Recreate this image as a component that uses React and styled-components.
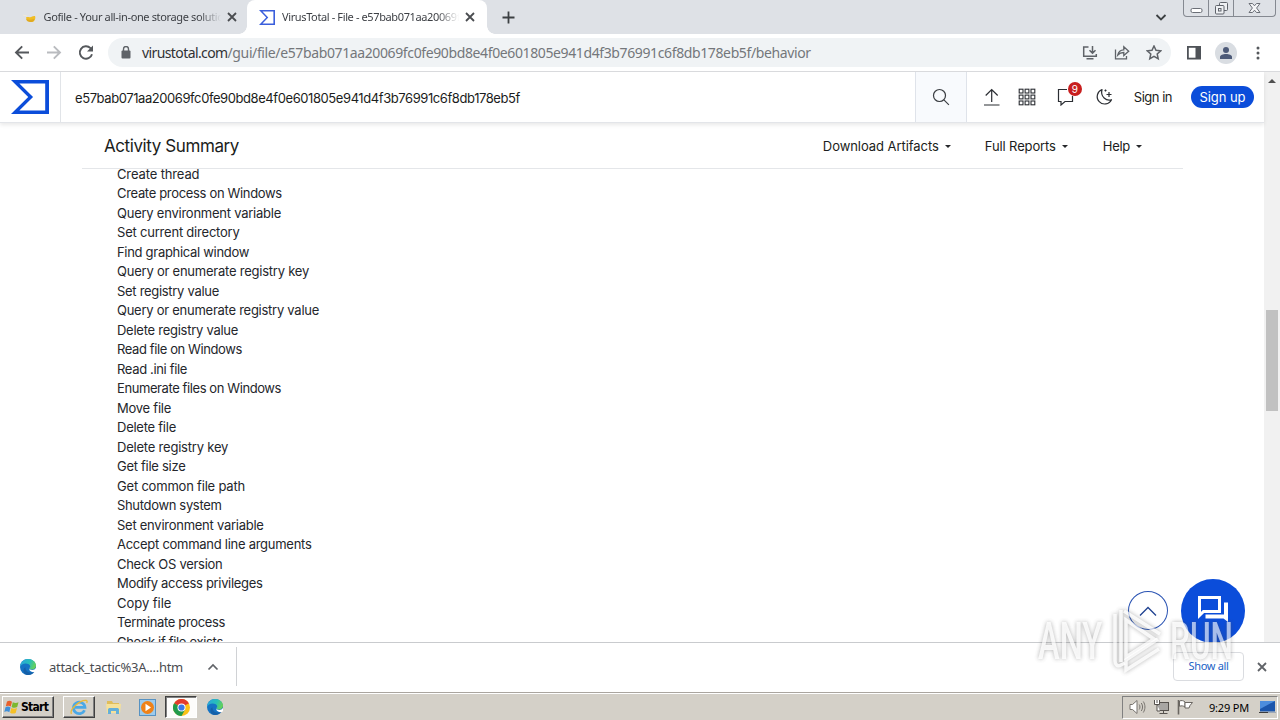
import React from "react"
import styled, { createGlobalStyle } from "styled-components"

const GlobalStyle = createGlobalStyle`
  * {
    box-sizing: border-box;
  }
  body {
    margin: 0;
    overflow: hidden;
    background: #fff;
  }
  svg {
    display: block;
    flex: none;
  }
`

const Screen = styled.div`
  position: relative;
  width: 1280px;
  height: 720px;
  display: flex;
  flex-direction: column;
  overflow: hidden;
  background: #fff;
  color: #202124;
  font-family: "Noto Sans", sans-serif;
`

/* browser chrome */
const TabStrip = styled.div`
  flex: none;
  height: 34px;
  display: flex;
  align-items: stretch;
  background: #dee1e6;
`
const Tab = styled.div`
  position: relative;
  width: ${p => (p.$active ? 240 : 247)}px;
  display: flex;
  align-items: center;
  padding-left: ${p => (p.$active ? 12 : 22)}px;
  border-radius: 8px 8px 0 0;
  background: ${p => (p.$active ? "#fff" : "transparent")};

  &::before,
  &::after {
    content: "";
    display: ${p => (p.$active ? "block" : "none")};
    position: absolute;
    bottom: 0;
    width: 8px;
    height: 8px;
  }
  &::before {
    left: -8px;
    background: radial-gradient(circle at 0 0, transparent 7.5px, #fff 8px);
  }
  &::after {
    right: -8px;
    background: radial-gradient(circle at 100% 0, transparent 7.5px, #fff 8px);
  }
`
const TabTitle = styled.div`
  width: 177px;
  margin: 0 6px 0 ${p => p.$before}px;
  overflow: hidden;
  white-space: nowrap;
  font-size: 11px;
  line-height: 16px;
  letter-spacing: ${p => p.$spacing}px;
  color: #3c3f44;
  mask-image: linear-gradient(90deg, #000 155px, transparent 177px);
`
const NewTab = styled.div`
  display: flex;
  align-items: center;
  margin-left: 15px;
  flex: 1;
`
const TabSearch = styled.div`
  display: flex;
  align-items: center;
  margin-right: 16px;
`
const WindowButtons = styled.div`
  display: grid;
  grid-template-columns: 25px 25px 41px;
  height: 17px;
  margin-right: 4px;
  border: 1px solid #858991;
  border-top: 0;
  border-radius: 0 0 4px 4px;
`
const WindowButton = styled.div`
  display: flex;
  justify-content: center;
  border-right: 1px solid #858991;

  &:last-child {
    border: 0;
  }
`
const Toolbar = styled.div`
  flex: none;
  height: 38px;
  display: flex;
  align-items: center;
  padding-left: 14px;
  border-bottom: 1px solid #d9dadd;
`
const NavButtons = styled.div`
  display: flex;
  gap: 16px;
`
const AddressBar = styled.div`
  flex: none;
  width: 1063px;
  height: 29px;
  margin-left: 14px;
  padding: 0 9px 0 12px;
  display: flex;
  align-items: center;
  border-radius: 15px;
  background: #f0f3f5;
`
const Url = styled.div`
  flex: 1;
  margin-left: 10px;
  white-space: nowrap;
  font-size: 14px;
  letter-spacing: -0.38px;
  color: #74777b;
`
const Domain = styled.span`
  letter-spacing: -0.6px;
  color: #303134;
`
const AddressActions = styled.div`
  display: flex;
  gap: 16px;
`
const ToolbarActions = styled.div`
  display: flex;
  align-items: center;
  gap: 13px;
  margin-left: 15px;
`
const Avatar = styled.div`
  width: 22px;
  height: 22px;
  display: flex;
  align-items: center;
  justify-content: center;
  border-radius: 50%;
  background: #d9dde2;
`

/* page */
const Viewport = styled.div`
  flex: none;
  height: 570px;
  display: flex;
  overflow: hidden;
`
const Page = styled.div`
  position: relative;
  width: 1264px;
  font-family: Inter, sans-serif;
`
const Scrollbar = styled.div`
  width: 16px;
  display: flex;
  flex-direction: column;
  align-items: center;
  padding-top: 6px;
  background: #f1f1f1;
`
const ScrollThumb = styled.div`
  width: 12px;
  height: 101px;
  margin-top: 226px;
  background: #c1c1c1;
`
const SiteHeader = styled.header`
  position: relative;
  height: 51px;
  display: flex;
  align-items: center;
  border-bottom: 1px solid #e3e5e9;
  box-shadow: 0 2px 4px rgba(0, 0, 0, 0.09);
`
const Brand = styled.div`
  width: 61px;
  height: 50px;
  padding: 8px 0 0 11px;
  border-right: 1px solid #e1e4e8;
`
const SearchText = styled.div`
  flex: 1;
  padding: 1px 0 0 14px;
  font-size: 13px;
  letter-spacing: -0.42px;
  color: #1b1d20;
`
const SearchButton = styled.div`
  width: 52px;
  height: 50px;
  display: flex;
  align-items: center;
  justify-content: center;
  border: solid #dfe3ea;
  border-width: 0 1px;
  background: #f8fafd;
`
const HeaderTools = styled.div`
  display: flex;
  align-items: center;
  margin-left: 15px;
  gap: 17px;
`
const Notifications = styled.div`
  position: relative;
  margin: 0 3px 0 4px;
`
const Badge = styled.span`
  position: absolute;
  top: -6px;
  left: 11px;
  width: 14px;
  height: 14px;
  border-radius: 50%;
  background: #c81e1e;
  color: #fff;
  font-size: 10px;
  line-height: 14px;
  text-align: center;
`
const SignIn = styled.span`
  margin-left: 21px;
  font-size: 13px;
  letter-spacing: -0.5px;
  color: #1b1d20;
`
const SignUp = styled.span`
  width: 63px;
  height: 22px;
  margin: 0 10px 0 19px;
  border-radius: 11px;
  background: #0b4dda;
  color: #fff;
  font-size: 13px;
  line-height: 22px;
  letter-spacing: -0.06px;
  text-align: center;
`
const SummaryBar = styled.div`
  height: 46px;
  width: 1101px;
  margin-left: 82px;
  padding: 0 41px 0 22px;
  display: flex;
  align-items: center;
  border-bottom: 1px solid #e4e6e9;
`
const SummaryTitle = styled.h1`
  flex: 1;
  margin: 0;
  font-size: 17px;
  font-weight: 400;
  letter-spacing: -0.41px;
  color: #1b1d20;
`
const MenuLabel = styled.div`
  display: flex;
  align-items: center;
  gap: 6px;
  margin-left: ${p => p.$before}px;
  font-size: 13px;
  letter-spacing: ${p => p.$spacing}px;
  color: #1b1d20;
`
const Caret = styled.i`
  margin-top: 1px;
  border: solid transparent;
  border-width: 3px 3px 0;
  border-top-color: #26282b;
`
const ActivityList = styled.ul`
  height: 478px;
  margin: -5px 0 0 117px;
  padding: 0.5px 0 0;
  list-style: none;
`
const Activity = styled.li`
  height: 19.5px;
  font-size: 13px;
  line-height: 19.5px;
  white-space: nowrap;
  letter-spacing: ${p => p.$spacing}px;
  color: #24262b;
`
const ScrollTop = styled.div`
  position: absolute;
  left: 1128px;
  top: 519px;
  width: 40px;
  height: 39px;
  display: flex;
  align-items: center;
  justify-content: center;
  border: 1px solid #2c55b4;
  border-radius: 50%;
  background: #fff;
`
const ChatButton = styled.div`
  position: absolute;
  left: 1181px;
  top: 507px;
  width: 64px;
  height: 64px;
  padding: 15px 0 0 16px;
  border-radius: 50%;
  background: #0b4dda;
`

/* downloads shelf */
const Shelf = styled.div`
  flex: none;
  height: 50px;
  display: flex;
  align-items: center;
  padding-bottom: 2px;
  border-top: 1px solid #c9cbce;
`
const Download = styled.div`
  width: 237px;
  height: 39px;
  padding-left: 20px;
  display: flex;
  align-items: center;
  border-right: 1px solid #d0d2d5;
`
const FileName = styled.span`
  width: 158px;
  margin-left: 13px;
  font-size: 13px;
  letter-spacing: -0.3px;
  color: #4a4c50;
`
const ShowAll = styled.div`
  width: 71px;
  height: 29px;
  margin: 0 13px 0 auto;
  border: 1px solid #dadce0;
  border-radius: 4px;
  color: #1a62c5;
  font-size: 11px;
  line-height: 26px;
  letter-spacing: -0.33px;
  text-align: center;
`
const CloseShelf = styled.div`
  margin-right: 13px;
`

/* taskbar */
const Taskbar = styled.div`
  flex: none;
  height: 28px;
  display: flex;
  align-items: center;
  padding: 1px 2px 0;
  border-top: 1px solid #aaa59f;
  box-shadow: inset 0 1px 0 #fff;
  background: #d4d0c8;
`
const StartButton = styled.div`
  width: 52px;
  height: 22px;
  display: flex;
  align-items: center;
  gap: 1px;
  padding-left: 1px;
  border: 1px solid;
  border-color: #fff #404040 #404040 #fff;
  box-shadow: inset -1px -1px 0 #808080;
  color: #000;
  font: bold 12px "DejaVu Sans Condensed", "DejaVu Sans", sans-serif;
  letter-spacing: -0.7px;
`
const TaskButton = styled.div`
  width: 32px;
  height: 22px;
  display: flex;
  align-items: center;
  justify-content: center;
  margin-left: ${p => p.$before || 2}px;
  border: 1px solid transparent;
  ${p => p.$state === "open" && "border-color: #fff #404040 #404040 #fff; box-shadow: inset -1px -1px 0 #808080;"}
  ${p => p.$state === "pressed" && "border-color: #404040 #fff #fff #404040; box-shadow: inset 1px 1px 0 #808080; background: #fdfcfb;"}
`
const Tray = styled.div`
  width: 156px;
  height: 23px;
  margin-left: auto;
  padding-left: 6px;
  display: flex;
  align-items: center;
  gap: 7px;
  border: 1px solid;
  border-color: #808080 #fff #fff #808080;
`
const Clock = styled.span`
  margin: 0 3px 0 8px;
  font-size: 11px;
  letter-spacing: -0.19px;
  white-space: nowrap;
  color: #000;
`

const Watermark = styled.div`
  position: absolute;
  left: 1038px;
  top: 607px;
  display: flex;
  align-items: center;
  height: 68px;
  opacity: 0.75;
  filter: drop-shadow(0 0 2px rgba(70, 70, 70, 0.65));
`
const WatermarkWord = styled.span`
  width: 66px;
  height: 40px;
  color: rgba(255, 255, 255, 0.85);
  font: 500 51px/42px Roboto, sans-serif;

  span {
    display: inline-block;
    transform: scaleX(${p => p.$scale});
    transform-origin: 0 50%;
  }
`

const activities = [
  ["Create thread", -0.13],
  ["Create process on Windows", -0.33],
  ["Query environment variable", -0.24],
  ["Set current directory", -0.21],
  ["Find graphical window", -0.3],
  ["Query or enumerate registry key", -0.23],
  ["Set registry value", -0.3],
  ["Query or enumerate registry value", -0.26],
  ["Delete registry value", -0.26],
  ["Read file on Windows", -0.4],
  ["Read .ini file", -0.35],
  ["Enumerate files on Windows", -0.41],
  ["Move file", -0.25],
  ["Delete file", -0.25],
  ["Delete registry key", -0.21],
  ["Get file size", -0.28],
  ["Get common file path", -0.2],
  ["Shutdown system", -0.33],
  ["Set environment variable", -0.26],
  ["Accept command line arguments", -0.27],
  ["Check OS version", -0.28],
  ["Modify access privileges", -0.33],
  ["Copy file", -0.03],
  ["Terminate process", -0.36],
  ["Check if file exists", -0.32],
]

const VirusTotalLogo = ({ width, height, color = "#0b4dda" }) => (
  <svg width={width} height={height} viewBox="0 1.32 24 21.36" preserveAspectRatio="none">
    <path d="M10.87 12 0 22.68h24V1.32H0zm10.73 8.52H5.28L13.917 12 5.28 3.48H21.6z" fill={color} />
  </svg>
)

const CloseIcon = ({ size = 10, color = "#4a4c50" }) => (
  <svg width={size} height={size} viewBox="0 0 10 10" stroke={color} strokeWidth="1.8">
    <path d="M1 1l8 8M9 1L1 9" />
  </svg>
)

const EdgeIcon = () => (
  <svg width="16" height="16" viewBox="0 0 16 16">
    <defs>
      <linearGradient id="edgeTop" x1="0" x2="1" y1="0.3" y2="0.6">
        <stop offset="0" stopColor="#2aa6dc" />
        <stop offset="0.55" stopColor="#27bfb8" />
        <stop offset="1" stopColor="#6cd34f" />
      </linearGradient>
    </defs>
    <circle cx="8" cy="8" r="8" fill="#1573c4" />
    <path d="M0 8C.3 3.4 3.7 0 8 0c4.7 0 8 3.2 8 6.5C16 9 14 10.5 11.8 10.5c-1.5 0-2.3-.5-2.3-1C9.5 9 10.2 8.700 10.200 7.600 10.200 5.800 8 4.600 5.600 4.600 3 4.600.8 6 0 8z" fill="url(#edgeTop)" />
    <path d="M5.500 8.200C5.200 11.400 7.600 13.500 10.800 13.500c1.600 0 2.800-.4 3.900-1C13.200 14.700 10.900 16 8 16c-3 0-5-2.500-4.500-5 .2-1.400 1-2.200 2-2.800z" fill="#1560a8" />
    <path d="M9.700 8.300c-1 1.400.2 2.700 2.500 2.700 1.600 0 3-.7 3.800-1.900l.5 2.400-1.500 1.600c-3.300.5-6.900-.8-5.300-4.800z" fill="#fff" />
  </svg>
)

const ChromeIcon = () => (
  <svg width="17" height="17" viewBox="0 0 24 24">
    <circle cx="12" cy="12" r="12" fill="#fbc116" />
    <path d="M12 12L1.600 6A12 12 0 0 1 22.400 6z" fill="#e33b2e" />
    <path d="M12 12L1.600 6A12 12 0 0 0 12 24l5-9z" fill="#229a4b" />
    <path d="M12 6.500h10.700a12 12 0 0 0-.3-.5L12 5z" fill="#e33b2e" />
    <circle cx="12" cy="12" r="5.7" fill="#fff" />
    <circle cx="12" cy="12" r="4.4" fill="#3b78e7" />
  </svg>
)

function BrowserTabs() {
  return (
    <TabStrip>
      <Tab>
        <svg width="16" height="16" viewBox="0 0 16 16">
          <path d="M4 8.500c2-1 3 .3 5-.6 1.500-.8 3-1 4-.9.700 1 .4 4.500-1.500 5.500C9 13.200 4.500 12.500 4 8.500z" fill="#f0bd25" />
          <path d="M4 10c2 1 5 1 8.500 0-.5 2.500-2 3-4 3-2.500 0-4-1-4.500-3z" fill="#e0aa20" />
          <path d="M1 6l4 1" stroke="#efe9dc" />
        </svg>
        <TabTitle $before={5.5} $spacing={-0.36}>Gofile - Your all-in-one storage solution</TabTitle>
        <CloseIcon />
      </Tab>
      <Tab $active>
        <VirusTotalLogo width={16} height={15} color="#3b5fdc" />
        <TabTitle $before={7} $spacing={-0.38}>VirusTotal - File - e57bab071aa20069fc0f</TabTitle>
        <CloseIcon />
      </Tab>
      <NewTab>
        <svg width="13" height="13" viewBox="0 0 13 13" stroke="#3c4043" strokeWidth="1.8">
          <path d="M6.500 .5v12M.5 6.500h12" />
        </svg>
      </NewTab>
      <TabSearch>
        <svg width="12" height="12" viewBox="0 0 12 12" fill="none" stroke="#3c4043" strokeWidth="1.8">
          <path d="M1.500 4L6 8.500 10.500 4" />
        </svg>
      </TabSearch>
      <WindowButtons>
        <WindowButton>
          <svg width="13" height="14" viewBox="0 0 13 14" fill="#fff" stroke="#6b6f77">
            <rect x="1" y="8.5" width="11" height="4" rx="1.5" />
          </svg>
        </WindowButton>
        <WindowButton>
          <svg width="13" height="15" viewBox="0 0 13 15" fill="#eef0f3" stroke="#5f636b">
            <rect x="4.5" y="2.5" width="8" height="8" rx="1" />
            <rect x=".5" y="5.5" width="8.5" height="8.5" rx="1" />
            <rect x="3.5" y="8.5" width="2.5" height="2.5" />
          </svg>
        </WindowButton>
        <WindowButton>
          <svg width="13" height="14" viewBox="0 0 13 14" fill="#f4f5f7" stroke="#6b6f77">
            <path d="M1 3.500h3.500l2 2.300 2-2.300H12L8.600 8l3.400 4.500H8.500l-2-2.300-2 2.300H1L4.400 8z" />
          </svg>
        </WindowButton>
      </WindowButtons>
    </TabStrip>
  )
}

function BrowserToolbar() {
  return (
    <Toolbar>
      <NavButtons>
        <svg width="16" height="16" viewBox="0 0 16 16" fill="none" stroke="#55585c" strokeWidth="1.9">
          <path d="M15 7.500H2.500M8.200 1.300L2 7.500l6.200 6.200" />
        </svg>
        <svg width="16" height="16" viewBox="0 0 16 16" fill="none" stroke="#b9bbbf" strokeWidth="1.9">
          <path d="M1 7.500h12.500M7.800 1.300L14 7.500l-6.200 6.200" />
        </svg>
        <svg width="16" height="16" viewBox="0 0 16 16" fill="none" stroke="#55585c" strokeWidth="1.9">
          <path d="M14 9.200a6.200 6.200 0 1 1-1.500-6L14.300 5" />
          <path d="M15 .6v6H9z" fill="#55585c" stroke="none" />
        </svg>
      </NavButtons>
      <AddressBar>
        <svg width="12" height="14" viewBox="0 0 12 14">
          <rect x="1.5" y="4.5" width="9" height="8" rx="1" fill="#5f6368" />
          <path d="M3.500 5V3a2.500 2.500 0 0 1 5 0v2" fill="none" stroke="#5f6368" strokeWidth="1.4" />
        </svg>
        <Url>
          <Domain>virustotal.com</Domain>
          /gui/file/e57bab071aa20069fc0fe90bd8e4f0e601805e941d4f3b76991c6f8db178eb5f/behavior
        </Url>
        <AddressActions>
          <svg width="16" height="16" viewBox="0 0 16 16" fill="none" stroke="#5f6368" strokeWidth="1.5">
            <path d="M6.500 2H1.700v9.300h12.600V9M4.500 13.700h7M10.500 1v7M7.500 5.300l3 3 3-3" />
          </svg>
          <svg width="16" height="16" viewBox="0 0 16 16" fill="none" stroke="#5f6368" strokeWidth="1.3">
            <path d="M1.500 4.500v9.300h11V11M3.800 10C4.500 6.500 6.500 5 9.800 4.900V1.700L14.700 6.200 9.800 10.500V7.500C7 7.500 5.300 8.300 3.800 10z" />
          </svg>
          <svg width="16" height="16" viewBox="0 0 16 16" fill="none" stroke="#5f6368" strokeWidth="1.5">
            <path d="M8 1l2 4.300 4.700.5-3.500 3.200 1 4.700L8 11.300l-4.200 2.400 1-4.700L1.300 5.800 6 5.300z" />
          </svg>
        </AddressActions>
      </AddressBar>
      <ToolbarActions>
        <svg width="16" height="14" viewBox="0 0 16 14">
          <rect x="1.9" y=".9" width="12.2" height="11.7" fill="none" stroke="#4f5358" strokeWidth="1.8" />
          <rect x="9.5" y="1" width="5" height="11.5" fill="#4f5358" />
        </svg>
        <Avatar>
          <svg width="14" height="14" viewBox="0 0 14 14" fill="#4d5a78">
            <circle cx="7" cy="4" r="3" />
            <path d="M1 13v-2c0-2 3-3 6-3s6 1 6 3v2z" />
          </svg>
        </Avatar>
        <svg width="16" height="16" viewBox="0 0 16 16" fill="#55585c">
          <circle cx="8" cy="3" r="1.5" />
          <circle cx="8" cy="8" r="1.5" />
          <circle cx="8" cy="13" r="1.5" />
        </svg>
      </ToolbarActions>
    </Toolbar>
  )
}

function Header() {
  return (
    <SiteHeader>
      <Brand>
        <VirusTotalLogo width={38} height={34} />
      </Brand>
      <SearchText>e57bab071aa20069fc0fe90bd8e4f0e601805e941d4f3b76991c6f8db178eb5f</SearchText>
      <SearchButton>
        <svg width="18" height="18" viewBox="0 0 18 18" fill="none" stroke="#3a3d42" strokeWidth="1.2">
          <circle cx="7.5" cy="7.5" r="6" />
          <path d="M11.900 11.900l5 5" />
        </svg>
      </SearchButton>
      <HeaderTools>
        <svg width="19" height="18" viewBox="0 0 19 18" fill="none" stroke="#2b2e33" strokeWidth="1.2">
          <path d="M2 17h15.500M9.700 14V1.500M3.700 7.500l6-6 6 6" />
        </svg>
        <svg width="18" height="18" viewBox="0 0 18 18" fill="none" stroke="#2b2e33" strokeWidth="1.1">
          {[1.2, 7.1, 13].map(y =>
            [1.2, 7.1, 13].map(x => <rect key={`${x}-${y}`} x={x} y={y} width="3.8" height="3.8" />)
          )}
        </svg>
        <Notifications>
          <svg width="18" height="18" viewBox="0 0 18 18" fill="none" stroke="#2b2e33" strokeWidth="1.2">
            <path d="M10 1.500H1.500v12H4V17l4-3.500h7.500V8" />
          </svg>
          <Badge>9</Badge>
        </Notifications>
        <svg width="18" height="18" viewBox="0 0 18 18" fill="none" stroke="#2b2e33" strokeWidth="1.2" strokeLinejoin="round">
          <path d="M7 1.500a7.500 7.500 0 1 0 9.500 10.200c-5 1.500-11.500-2.700-9.500-10.200z" />
          <path d="M14 4v5M11.500 6.500h5M10.500 1.500v2M9.500 2.500h2" />
        </svg>
      </HeaderTools>
      <SignIn>Sign in</SignIn>
      <SignUp>Sign up</SignUp>
    </SiteHeader>
  )
}

function DownloadShelf() {
  return (
    <Shelf>
      <Download>
        <EdgeIcon />
        <FileName>attack_tactic%3A....htm</FileName>
        <svg width="12" height="12" viewBox="0 0 12 12" fill="none" stroke="#606368" strokeWidth="1.7">
          <path d="M1.500 8.500L6 4l4.500 4.500" />
        </svg>
      </Download>
      <ShowAll>Show all</ShowAll>
      <CloseShelf>
        <CloseIcon color="#606368" />
      </CloseShelf>
    </Shelf>
  )
}

function WindowsTaskbar() {
  return (
    <Taskbar>
      <StartButton>
        <svg width="16" height="16" viewBox="0 0 16 16">
          <path d="M3 2.500c2-1.200 3.500-.8 5 .2L6.800 7.500c-1.500-1-3-1.200-5-.3z" fill="#e8602c" />
          <path d="M8.800 3.200c1.800 1 3.500 1.200 5.700.1l-1.300 4.800c-2 1-3.800.9-5.600-.2z" fill="#7cb82f" />
          <path d="M1.500 8.200c2-1 3.500-.6 5 .3L5.300 13.200c-1.500-1-3-1.200-5-.3z" fill="#3f8fd9" />
          <path d="M7.300 9c1.800 1 3.500 1.200 5.700.1l-1.300 4.800c-2 1-3.800.9-5.600-.2z" fill="#f5c026" />
        </svg>
        Start
      </StartButton>
      <TaskButton $state="open" $before={9}>
        <svg width="18" height="18" viewBox="0 0 18 18" fill="none">
          <path d="M14.500 12.300a5.800 5.800 0 1 1 .5-3H5" stroke="#4ba8e6" strokeWidth="2.7" />
          <path d="M1.500 15.800C-1 12 10 1.500 16.500 2.500c.8.300.8 1.500.2 2.500" stroke="#ebb935" strokeWidth="1.3" />
        </svg>
      </TaskButton>
      <TaskButton>
        <svg width="17" height="17" viewBox="0 0 17 17">
          <path d="M2 2h5l1 2h6v10H2z" fill="#e0bd5a" />
          <path d="M1 5h15l-1 9H2z" fill="#f6e199" />
          <path d="M3 15V10.500c0-1 1-1.500 2-1.500h7c1 0 2 .5 2 1.500V15h-3v-3H6v3z" fill="#65afd9" />
        </svg>
      </TaskButton>
      <TaskButton>
        <svg width="17" height="17" viewBox="0 0 17 17">
          <rect x=".5" y=".5" width="16" height="16" fill="#9ccbed" stroke="#5792c2" />
          <circle cx="8.5" cy="8.5" r="6.5" fill="#ef8218" />
          <path d="M6.500 4.800v7.400l5.500-3.700z" fill="#fff" />
        </svg>
      </TaskButton>
      <TaskButton $state="pressed">
        <ChromeIcon />
      </TaskButton>
      <TaskButton>
        <EdgeIcon />
      </TaskButton>
      <Tray>
        <svg width="17" height="16" viewBox="0 0 17 16" fill="#fff" stroke="#77736e">
          <path d="M1 5.500h2.500L8 1.500v13l-4.500-4H1z" />
          <path d="M10.200 5.500c1 1.500 1 3.500 0 5M12.300 4c1.700 2.500 1.700 5.500 0 8M14.300 2.500c2.200 3.500 2.200 7.500 0 11" fill="none" />
        </svg>
        <svg width="17" height="16" viewBox="0 0 17 16" fill="#fff" stroke="#56524e">
          <rect x="4.5" y="3.5" width="11" height="8" fill="#a8a6a3" />
          <path d="M6.500 14.500h8M10.500 12v2" />
          <path d="M1.500 1v4.500h5V1M4 1v3M4 5.500V12h3" />
        </svg>
        <svg width="17" height="16" viewBox="0 0 17 16" fill="#fff" stroke="#6a6661">
          <path d="M2.500 2c2-.8 4-.5 5.500 1v5c-1.500-1.200-3.500-1.500-5.500-.7z" />
          <path d="M8 3.500h7.500L13 6.500l-1 2.500H8z" />
          <path d="M1.500 1v14.500" strokeWidth="1.6" />
        </svg>
        <Clock>9:29 PM</Clock>
        <svg width="17" height="16" viewBox="0 0 17 16">
          <rect x="1" y="2" width="15" height="10.5" fill="#1c56ac" />
          <path d="M1 2h15L1 10z" fill="#4d8ddd" />
          <path d="M0 13.500h9" stroke="#3c3c3c" />
          <path d="M9 13.500h8" stroke="#9ea9b8" />
        </svg>
      </Tray>
    </Taskbar>
  )
}

export default function App() {
  return (
    <>
      <GlobalStyle />
      <Screen>
        <BrowserTabs />
        <BrowserToolbar />
        <Viewport>
          <Page>
            <Header />
            <SummaryBar>
              <SummaryTitle>Activity Summary</SummaryTitle>
              <MenuLabel $spacing={-0.06}>Download Artifacts<Caret /></MenuLabel>
              <MenuLabel $before={34} $spacing={-0.12}>Full Reports<Caret /></MenuLabel>
              <MenuLabel $before={35} $spacing={-0.3}>Help<Caret /></MenuLabel>
            </SummaryBar>
            <ActivityList>
              {activities.map(([name, spacing]) => (
                <Activity key={name} $spacing={spacing}>{name}</Activity>
              ))}
            </ActivityList>
            <ScrollTop>
              <svg width="18" height="12" viewBox="0 0 18 12" fill="none" stroke="#1f4291" strokeWidth="1.3">
                <path d="M1 10.500l8-8 8 8" />
              </svg>
            </ScrollTop>
            <ChatButton>
              <svg width="32" height="32" viewBox="0 0 32 32" fill="none" stroke="#fff" strokeWidth="3">
                <path d="M2.500 3.500h20v14H6.500l-4 4z" />
                <path d="M27 8.500h4v19.500L26.500 24.500H8.500v-4h18.500z" fill="#fff" stroke="none" />
              </svg>
            </ChatButton>
          </Page>
          <Scrollbar>
            <svg width="8" height="6" viewBox="0 0 8 6">
              <path d="M0 5l4-4 4 4z" fill="#505050" />
            </svg>
            <ScrollThumb />
          </Scrollbar>
        </Viewport>
        <DownloadShelf />
        <WindowsTaskbar />
        <Watermark>
          <WatermarkWord $scale={0.64}><span>ANY</span></WatermarkWord>
          <svg width="66" height="68" viewBox="0 0 66 68" fill="none" stroke="#fff" strokeOpacity=".85" strokeWidth="3.5">
            <path d="M17 3v52" />
            <path d="M11 7v47c0 4 3 6 6 4l4-2" />
            <path d="M20 4l36 23M22 13l28 19-28 18V13z" />
            <path d="M54 32L22 53v10l33-21" />
          </svg>
          <WatermarkWord $scale={0.62}><span>RUN</span></WatermarkWord>
        </Watermark>
      </Screen>
    </>
  )
}
